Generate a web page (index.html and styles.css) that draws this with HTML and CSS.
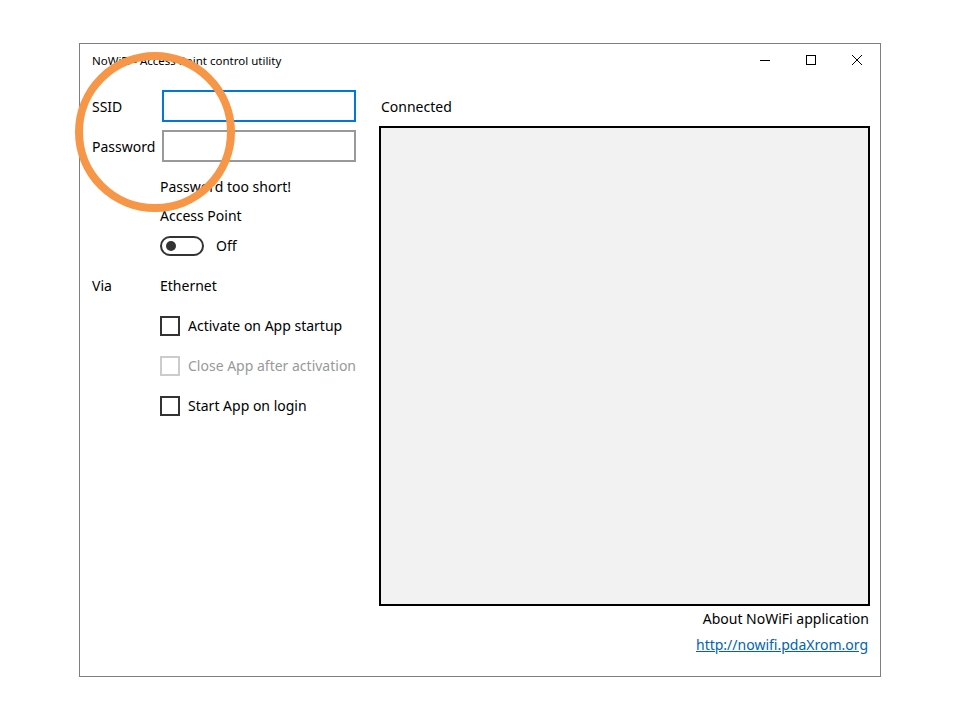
FILE: index.html
```html
<!DOCTYPE html>
<html>
<head>
<meta charset="utf-8">
<link rel="stylesheet" href="styles.css">
</head>
<body>
<div class="window">
  <div class="titlebar">
    <div class="title">NoWiFi - Access Point control utility</div>
    <div class="caption">
      <div class="cbtn"><svg width="10" height="10" viewBox="0 0 10 10"><path d="M0 5.5H10" stroke="#000" stroke-width="1"/></svg></div>
      <div class="cbtn"><svg width="10" height="10" viewBox="0 0 10 10"><rect x="0.5" y="0.5" width="9" height="9" fill="none" stroke="#000" stroke-width="1"/></svg></div>
      <div class="cbtn"><svg width="10" height="10" viewBox="0 0 10 10"><path d="M0 0L10 10M10 0L0 10" stroke="#000" stroke-width="1"/></svg></div>
    </div>
  </div>
  <div class="content">
    <div class="left">
      <div class="field">
        <span class="label">SSID</span>
        <div class="input focused"></div>
      </div>
      <div class="field f2">
        <span class="label">Password</span>
        <div class="input"></div>
      </div>
      <div class="indent msg">Password too short!</div>
      <div class="indent ap">Access Point</div>
      <div class="indent toggle-row">
        <div class="toggle"><div class="knob"></div></div>
        <span class="toff">Off</span>
      </div>
      <div class="via">
        <span class="label">Via</span>
        <span class="vval">Ethernet</span>
      </div>
      <div class="indent check c1"><div class="box"></div><span>Activate on App startup</span></div>
      <div class="indent check disabled"><div class="box"></div><span>Close App after activation</span></div>
      <div class="indent check"><div class="box"></div><span>Start App on login</span></div>
    </div>
    <div class="right">
      <div class="status">Connected</div>
      <div class="log"></div>
      <div class="about">About NoWiFi application</div>
      <a class="link" href="#">http://nowifi.pdaXrom.org</a>
    </div>
  </div>
</div>
<svg class="ring" width="170" height="170" viewBox="0 0 170 170"><circle cx="85" cy="85" r="76" fill="none" stroke="#f79646" stroke-width="8"/></svg>
</body>
</html>
```
FILE: styles.css
```css
html, body {
  margin: 0;
  padding: 0;
  background: #fff;
}
body {
  font-family: "Noto Sans", "Open Sans", sans-serif;
  font-size: 14px;
  color: #000;
}
.window {
  margin-left: 79px;
  margin-top: 43px;
  width: 800px;
  height: 632px;
  border: 1px solid #7f7f7f;
  display: flex;
  flex-direction: column;
}
.titlebar {
  height: 32px;
  display: flex;
  align-items: center;
  justify-content: space-between;
}
.title {
  font-size: 11.5px;
  padding-left: 12px;
}
.caption {
  display: flex;
  height: 32px;
}
.cbtn {
  width: 46px;
  height: 32px;
  display: flex;
  align-items: center;
  justify-content: center;
}
.content {
  display: flex;
  flex: 1;
}
.left {
  width: 287px;
  padding-left: 12px;
  padding-top: 14px;
  display: flex;
  flex-direction: column;
}
.field {
  display: flex;
  height: 32px;
}
.f2 {
  margin-top: 8px;
}
.label {
  width: 70px;
  line-height: 20px;
}
.field .label {
  padding-top: 7px;
}
.input {
  box-sizing: border-box;
  width: 194px;
  height: 32px;
  border: 2px solid #999;
  background: #fff;
}
.input.focused {
  border-color: #0078d7;
}
.indent {
  margin-left: 68px;
  line-height: 20px;
}
.msg {
  margin-top: 15px;
}
.ap {
  margin-top: 9px;
}
.toggle-row {
  margin-top: 10px;
  display: flex;
  align-items: center;
}
.toggle {
  box-sizing: border-box;
  width: 44px;
  height: 20px;
  border: 2px solid #333;
  border-radius: 10px;
  display: flex;
  align-items: center;
  padding-left: 4px;
}
.knob {
  width: 10px;
  height: 10px;
  border-radius: 50%;
  background: #333;
}
.toff {
  margin-left: 12px;
}
.via {
  margin-top: 20px;
  display: flex;
  line-height: 20px;
}
.via .label {
  width: 68px;
}
.check {
  margin-top: 20px;
  display: flex;
  align-items: center;
  height: 20px;
}
.box {
  box-sizing: border-box;
  width: 20px;
  height: 20px;
  border: 2px solid #333;
  margin-right: 8px;
}
.check.disabled {
  color: #999;
}
.check.disabled .box {
  border-color: #ccc;
}
.right {
  flex: 1;
  padding-left: 0;
  padding-right: 10px;
  padding-top: 21px;
  display: flex;
  flex-direction: column;
}
.status {
  line-height: 20px;
  padding-left: 2px;
}
.log {
  box-sizing: border-box;
  margin-top: 9px;
  height: 480px;
  border: 2px solid #000;
  background: #f2f2f2;
}
.about {
  margin-top: 3px;
  line-height: 20px;
  text-align: right;
  padding-right: 1px;
}
.link {
  margin-top: 6px;
  line-height: 20px;
  align-self: flex-end;
  margin-right: 2px;
  color: #0063b1;
  text-decoration: underline;
}
.ring {
  position: absolute;
  left: 70px;
  top: 47px;
}
```
